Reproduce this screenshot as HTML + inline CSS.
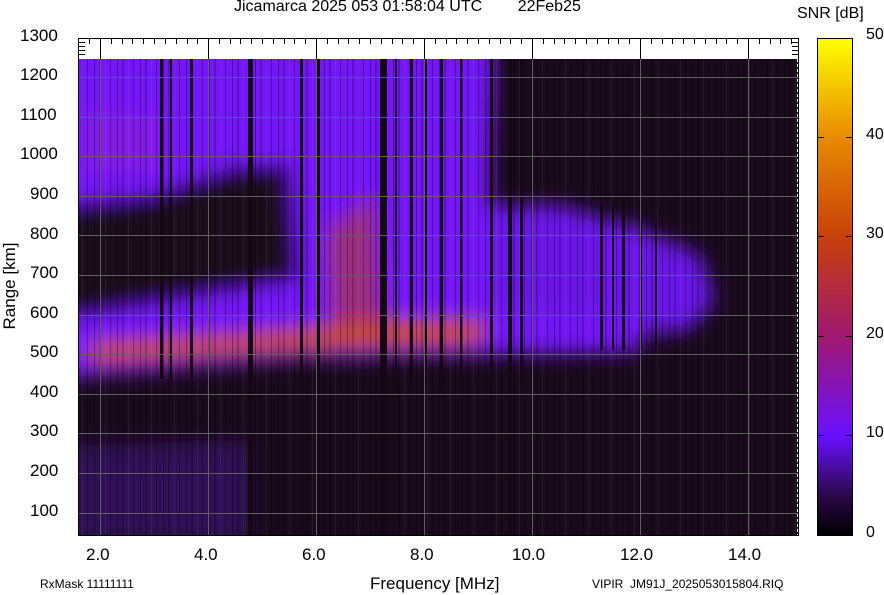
<!DOCTYPE html>
<html><head><style>
body{margin:0;background:#fff;width:884px;height:595px;overflow:hidden;font-family:"Liberation Sans",sans-serif;position:relative}
.t{position:absolute;font-size:17px;color:#000;white-space:nowrap}
.s{position:absolute;font-size:12px;color:#000;white-space:nowrap}
</style></head><body>
<div class="t" style="left:234px;top:-2px;font-size:16px">Jicamarca 2025 053 01:58:04 UTC&nbsp;&nbsp;&nbsp;&nbsp;&nbsp;&nbsp;&nbsp;&nbsp;22Feb25</div>
<div class="t" style="left:797px;top:5px;font-size:16px">SNR [dB]</div>
<svg width="884" height="595" style="position:absolute;left:0;top:0">
<defs>
<filter id="b" filterUnits="userSpaceOnUse" x="0" y="0" width="884" height="595"><feGaussianBlur stdDeviation="10"/></filter>
<linearGradient id="cb" x1="0" y1="0" x2="0" y2="1">
<stop offset="0" stop-color="#ffff00"/><stop offset="0.2" stop-color="#e88a00"/><stop offset="0.4" stop-color="#c8400a"/><stop offset="0.6" stop-color="#a01870"/><stop offset="0.8" stop-color="#6a10ff"/><stop offset="0.92" stop-color="#2a0848"/><stop offset="1" stop-color="#000"/></linearGradient>
<pattern id="n" width="23" height="10" patternUnits="userSpaceOnUse">
<rect x="2" width="1" height="10" fill="#000" opacity="0.35"/><rect x="7" width="2" height="10" fill="#000" opacity="0.2"/><rect x="13" width="1" height="10" fill="#fff" opacity="0.06"/><rect x="18" width="1" height="10" fill="#000" opacity="0.3"/></pattern>
<clipPath id="c"><rect x="79" y="59" width="719" height="476"/></clipPath>
</defs>
<rect x="79" y="59" width="719" height="476" fill="#1a0b1c"/>
<g clip-path="url(#c)">
<g filter="url(#b)">
<path d="M60,40 L495,40 L490,200 L500,345 L60,355 Z" fill="#7418f8"/>
<path d="M60,205 L150,195 L240,165 L290,165 L300,280 L60,320 Z" fill="#1a0b1c"/>
<path d="M490,205 L560,205 L640,228 L700,255 L715,300 L690,330 L560,345 L490,350 Z" fill="#6a16e8"/>
<path d="M60,325 L300,315 L500,310 L640,320 L640,352 L300,358 L60,378 Z" fill="#7418f8"/>
<path d="M90,342 L250,332 L400,318 L490,320 L480,345 L300,352 L90,365 Z" fill="#c84814"/>
<path d="M325,230 L375,195 L385,325 L330,325 Z" fill="#b83c30" opacity="0.6"/>
<path d="M60,445 L250,440 L250,545 L60,545 Z" fill="#4a10a0" opacity="0.45"/>
<path d="M85,110 L160,115 L160,170 L85,170 Z" fill="#9a28d0" opacity="0.45"/>
</g>
<rect x="79" y="59" width="719" height="476" fill="url(#n)"/>
<g fill="#140814">
<rect x="160" y="59" width="3" height="320"/><rect x="170" y="59" width="2" height="320"/><rect x="190" y="59" width="3" height="320"/>
<rect x="248" y="59" width="5" height="476"/><rect x="300" y="59" width="3" height="320"/><rect x="316" y="59" width="4" height="476"/>
<rect x="380" y="59" width="7" height="476"/><rect x="395" y="59" width="2" height="330"/><rect x="410" y="59" width="3" height="330"/>
<rect x="425" y="59" width="2" height="330"/><rect x="440" y="59" width="3" height="330"/><rect x="460" y="59" width="2" height="330"/>
<rect x="490" y="59" width="3" height="330"/><rect x="508" y="59" width="4" height="476"/><rect x="520" y="59" width="3" height="330"/>
<rect x="600" y="200" width="3" height="150"/><rect x="612" y="200" width="2" height="150"/><rect x="622" y="200" width="3" height="150"/><rect x="640" y="220" width="2" height="130"/><rect x="655" y="220" width="2" height="130"/>
</g>
</g>
<g stroke="#606060" stroke-width="1">
<path d="M79,77.5H798M79,117.5H798M79,156.5H798M79,196.5H798M79,235.5H798M79,275.5H798M79,315.5H798M79,354.5H798M79,394.5H798M79,433.5H798M79,473.5H798M79,513.5H798"/>
<path d="M100.5,59V535M208.5,59V535M316.5,59V535M424.5,59V535M532.5,59V535M640.5,59V535M748.5,59V535"/>
</g>
<g stroke="#000"><path d="M100.5,38V59M208.5,38V59M316.5,38V59M424.5,38V59M532.5,38V59M640.5,38V59M748.5,38V59"/>
<path d="M111.5,38v6M122.5,38v6M132.5,38v6M143.5,38v6M154.5,38v6M165.5,38v6M176.5,38v6M187.5,38v6M197.5,38v6M219.5,38v6M230.5,38v6M240.5,38v6M251.5,38v6M262.5,38v6M273.5,38v6M284.5,38v6M294.5,38v6M305.5,38v6M327.5,38v6M338.5,38v6M348.5,38v6M359.5,38v6M370.5,38v6M381.5,38v6M392.5,38v6M402.5,38v6M413.5,38v6M435.5,38v6M446.5,38v6M456.5,38v6M467.5,38v6M478.5,38v6M489.5,38v6M500.5,38v6M510.5,38v6M521.5,38v6M543.5,38v6M554.5,38v6M564.5,38v6M575.5,38v6M586.5,38v6M597.5,38v6M608.5,38v6M618.5,38v6M629.5,38v6M651.5,38v6M662.5,38v6M672.5,38v6M683.5,38v6M694.5,38v6M705.5,38v6M716.5,38v6M726.5,38v6M737.5,38v6M759.5,38v6M770.5,38v6M780.5,38v6M791.5,38v6M89.5,38v6"/>
<path d="M79,42.5h6M79,46.5h6M79,50.5h6M79,54.5h6M792,42.5h6M792,46.5h6M792,50.5h6M792,54.5h6"/></g>
<rect x="78.5" y="38.5" width="720" height="497" fill="none" stroke="#000"/>
<line x1="797.5" y1="59" x2="797.5" y2="535" stroke="#fff" stroke-dasharray="3,2"/>
<rect x="817.5" y="38.5" width="35" height="497" fill="url(#cb)" stroke="#000"/>
<g stroke="#000"><path d="M818,137.5h6M846,137.5h6M818,236.5h6M846,236.5h6M818,336.5h6M846,336.5h6M818,435.5h6M846,435.5h6"/></g>
</svg>
<div class="t" style="left:20px;top:26px">1300</div>
<div class="t" style="left:20px;top:65px">1200</div>
<div class="t" style="left:20px;top:105px">1100</div>
<div class="t" style="left:20px;top:144px">1000</div>
<div class="t" style="left:30px;top:184px">900</div>
<div class="t" style="left:30px;top:224px">800</div>
<div class="t" style="left:30px;top:263px">700</div>
<div class="t" style="left:30px;top:303px">600</div>
<div class="t" style="left:30px;top:342px">500</div>
<div class="t" style="left:30px;top:382px">400</div>
<div class="t" style="left:30px;top:421px">300</div>
<div class="t" style="left:30px;top:461px">200</div>
<div class="t" style="left:30px;top:501px">100</div>
<div class="t" style="left:-35px;top:276px;width:90px;text-align:center;transform:rotate(-90deg)">Range [km]</div>
<div class="t" style="left:86px;top:545px">2.0</div>
<div class="t" style="left:194px;top:545px">4.0</div>
<div class="t" style="left:302px;top:545px">6.0</div>
<div class="t" style="left:410px;top:545px">8.0</div>
<div class="t" style="left:512px;top:545px">10.0</div>
<div class="t" style="left:620px;top:545px">12.0</div>
<div class="t" style="left:728px;top:545px">14.0</div>
<div class="t" style="left:370px;top:574px">Frequency [MHz]</div>
<div class="s" style="left:40px;top:577px">RxMask 11111111</div>
<div class="s" style="left:592px;top:577px">VIPIR&nbsp; JM91J_2025053015804.RIQ</div>
<div class="s" style="left:866px;top:26px;font-size:16px">50</div>
<div class="s" style="left:866px;top:126px;font-size:16px">40</div>
<div class="s" style="left:866px;top:225px;font-size:16px">30</div>
<div class="s" style="left:866px;top:325px;font-size:16px">20</div>
<div class="s" style="left:866px;top:424px;font-size:16px">10</div>
<div class="s" style="left:866px;top:524px;font-size:16px">0</div>
</body></html>
